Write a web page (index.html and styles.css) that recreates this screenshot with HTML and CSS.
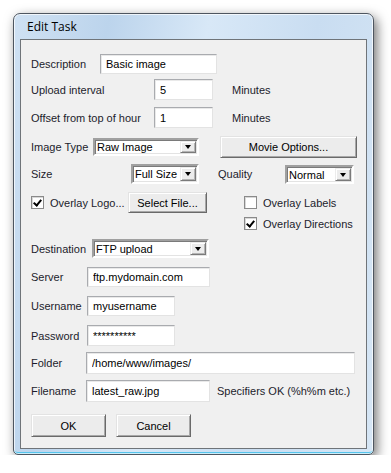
FILE: index.html
```html
<!DOCTYPE html>
<html lang="en">
<head>
    <meta charset="UTF-8">
    <title>Edit Task</title>
    <link rel="stylesheet" href="styles.css">
</head>
<body>

    <div class="window">
        <div class="titlebar">Edit Task</div>

        <div class="client">
            <!-- Task -->
            <div class="row r1">
                <span class="lbl w-desc">Description</span>
                <input type="text" class="field f-desc" value="Basic image">
            </div>
            <div class="row r2">
                <span class="lbl w-int">Upload interval</span>
                <input type="text" class="field f-num" value="5">
                <span class="unit">Minutes</span>
            </div>
            <div class="row r3">
                <span class="lbl w-int">Offset from top of hour</span>
                <input type="text" class="field f-num" value="1">
                <span class="unit">Minutes</span>
            </div>

            <!-- Image -->
            <div class="row r4">
                <span class="lbl w-type">Image Type</span>
                <div class="combo c-type"><span class="combo-text">Raw Image</span><span class="combo-btn"></span></div>
                <button class="btn b-movie">Movie Options...</button>
            </div>
            <div class="row r5">
                <span class="lbl w-size">Size</span>
                <div class="combo c-size"><span class="combo-text">Full Size</span><span class="combo-btn"></span></div>
                <span class="lbl w-quality">Quality</span>
                <div class="combo c-quality"><span class="combo-text">Normal</span><span class="combo-btn"></span></div>
            </div>
            <div class="row r6">
                <label class="check w-logo"><span class="box on"></span>Overlay Logo...</label>
                <button class="btn b-file">Select File...</button>
                <label class="check c-labels"><span class="box"></span>Overlay Labels</label>
            </div>
            <div class="row r7">
                <label class="check c-dirs"><span class="box on"></span>Overlay Directions</label>
            </div>

            <!-- Upload -->
            <div class="row r8">
                <span class="lbl w-dest">Destination</span>
                <div class="combo c-dest"><span class="combo-text">FTP upload</span><span class="combo-btn"></span></div>
            </div>
            <div class="row r9">
                <span class="lbl w-ftp">Server</span>
                <input type="text" class="field f-server" value="ftp.mydomain.com">
            </div>
            <div class="row r10">
                <span class="lbl w-ftp">Username</span>
                <input type="text" class="field f-user" value="myusername">
            </div>
            <div class="row r11">
                <span class="lbl w-ftp">Password</span>
                <input type="text" class="field f-user" value="**********">
            </div>
            <div class="row r12">
                <span class="lbl w-path">Folder</span>
                <input type="text" class="field f-folder" value="/home/www/images/">
            </div>
            <div class="row r13">
                <span class="lbl w-path">Filename</span>
                <input type="text" class="field f-file" value="latest_raw.jpg">
                <span class="hint">Specifiers OK (%h%m etc.)</span>
            </div>

            <div class="row r14">
                <button class="btn b-dlg">OK</button>
                <button class="btn b-dlg">Cancel</button>
            </div>
        </div>
    </div>

</body>
</html>
```

FILE: styles.css
```css
body {
    margin: 0;
    background: #fff;
    font-family: 'Liberation Sans', Arial, sans-serif;
    font-size: 11px;
    color: #1c1c2c;
}
.window {
    margin: 13px 0 0 13px;
    width: 361px;
    height: 442px;
    box-sizing: border-box;
    border: 1px solid #4e5660;
    border-radius: 7px 7px 5px 5px;
    background: linear-gradient(100deg, #cfe1f3 0%, #bcd4ec 22%, #d8e8f7 45%, #c9ddf1 70%, #d6e6f5 100%);
    box-shadow: 3px 4px 12px rgba(0, 0, 0, 0.55), inset 0 0 0 1px rgba(255, 255, 255, 0.7), inset 0 -2px 0 #56c4ec;
    padding: 0 6px 6px 6px;
}
.titlebar {
    height: 25px;
    line-height: 26px;
    padding-left: 7px;
    font-family: 'Open Sans', 'Noto Sans', sans-serif;
    font-size: 12px;
    color: #000;
}
.client {
    height: 410px;
    box-sizing: border-box;
    border: 1px solid #6f7479;
    background: #f0f0f0;
    padding: 14px 0 0 10px;
}
.row {
    display: flex;
    align-items: center;
}
.r1 { height: 20px; }
.r2 { height: 21px; margin-top: 5px; }
.r3 { height: 21px; margin-top: 7px; }
.r4 { height: 22px; margin-top: 8px; }
.r5 { height: 20px; margin-top: 6px; }
.r6 { height: 21px; margin-top: 8px; }
.r7 { height: 17px; margin-top: 2px; }
.r8 { height: 19px; margin-top: 7px; }
.r9 { height: 20px; margin-top: 9px; }
.r10 { height: 20px; margin-top: 9px; }
.r11 { height: 21px; margin-top: 9px; }
.r12 { height: 22px; margin-top: 6px; }
.r13 { height: 22px; margin-top: 6px; }
.r14 { height: 23px; margin-top: 12px; }

.lbl {
    flex: none;
    white-space: nowrap;
}
.w-desc { width: 69px; }
.w-int { width: 123px; }
.w-type { width: 62px; }
.w-size { width: 100px; }
.w-quality { width: 67px; margin-left: 19px; }
.w-dest { width: 61px; }
.w-ftp { width: 56px; }
.w-path { width: 55px; }

.field {
    flex: none;
    height: 100%;
    box-sizing: border-box;
    margin: 0;
    padding: 0 0 0 5px;
    font: inherit;
    color: #000;
    background: #fff;
    border: 1px solid;
    border-color: #a9abaf #e3e3e3 #e3e3e3 #a9abaf;
    box-shadow: inset 1px 1px 0 #e9e9e9;
    outline: none;
}
.f-desc { width: 117px; }
.f-num { width: 59px; }
.f-server { width: 123px; }
.f-user { width: 88px; }
.f-folder { width: 269px; }
.f-file { width: 124px; }
.unit { margin-left: 19px; }
.hint { margin-left: 7px; }

.combo {
    flex: none;
    display: flex;
    height: 100%;
    box-sizing: border-box;
    background: #fff;
    border: 2px solid;
    border-color: #a0a0a0 #fff #fff #a0a0a0;
    box-shadow: inset 1px 1px 0 #7a7a7a, inset -1px -1px 0 #e3e3e3;
    color: #000;
}
.combo-text {
    flex: 1;
    padding-left: 2px;
    display: flex;
    align-items: center;
}
.combo-btn {
    flex: none;
    width: 16px;
    margin: 1px 1px 1px 0;
    box-sizing: border-box;
    background: #ececec;
    border: 1px solid;
    border-color: #ececec #7a7a7a #7a7a7a #ececec;
    box-shadow: inset 1px 1px 0 #fff, inset -1px -1px 0 #b4b4b4;
    position: relative;
}
.combo-btn::after {
    content: "";
    position: absolute;
    left: 4px;
    top: 50%;
    margin-top: -2px;
    border-left: 3.5px solid transparent;
    border-right: 3.5px solid transparent;
    border-top: 4px solid #000;
}
.r4 .combo { height: 18px; }
.c-type { width: 106px; }
.c-size { width: 68px; }
.c-quality { width: 69px; height: 19px; margin-top: 1px; }
.c-dest { width: 117px; }

.btn {
    flex: none;
    height: 100%;
    box-sizing: border-box;
    margin: 0;
    padding: 0;
    font: inherit;
    color: #000;
    background: #ececec;
    border: 1px solid;
    border-color: #e3e3e3 #6a6a6a #6a6a6a #e3e3e3;
    box-shadow: inset 1px 1px 0 #fff, inset -1px -1px 0 #a8a8a8;
}
.b-movie { width: 137px; margin-left: 21px; }
.b-file { width: 79px; }
.b-dlg { width: 75px; }
.b-dlg + .b-dlg { margin-left: 10px; }

.check {
    flex: none;
    display: flex;
    align-items: center;
    white-space: nowrap;
}
.w-logo { width: 97px; }
.c-labels { margin-left: 37px; }
.c-dirs { margin-left: 213px; }
.box {
    flex: none;
    width: 13px;
    height: 13px;
    box-sizing: border-box;
    margin-right: 6px;
    background: #fff;
    border: 1px solid #8a8a8a;
    box-shadow: inset 1px 1px 0 #d8d8d8;
    position: relative;
}
.box.on::after {
    content: "";
    position: absolute;
    left: 2px;
    top: 0;
    width: 3px;
    height: 6px;
    border: solid #000;
    border-width: 0 2px 2px 0;
    transform: translate(1px, 1px) rotate(40deg);
}
```
